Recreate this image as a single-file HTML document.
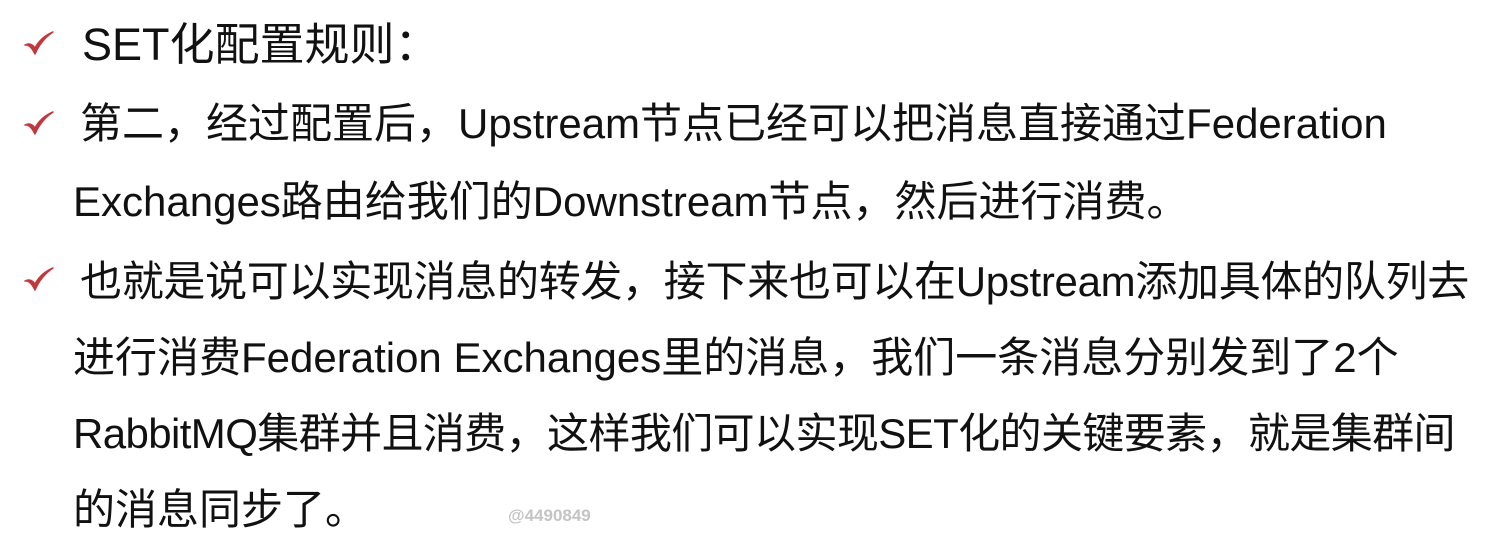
<!DOCTYPE html>
<html><head><meta charset="utf-8"><style>
body{margin:0;width:1500px;height:544px;background:#fff;overflow:hidden;position:relative;font-family:"Liberation Sans","Noto Sans CJK SC",sans-serif;color:#111;}
.l{position:absolute;white-space:nowrap;font-size:42px;line-height:50px;}
.c{position:absolute;left:24px;width:30px;height:28px;}
.w{position:absolute;left:508px;top:506px;font-size:17px;color:#c4c4c4;font-weight:bold;}
</style></head><body>
<svg class="c" style="top:30px" viewBox="0 0 30 28"><path d="M1 15 Q6 14 11 24 Q17 10 29 2 Q17 7 11 18 Q7 12 1 15Z" fill="#c0393e" stroke="#c0393e" stroke-width="1.5" stroke-linejoin="round"/></svg>
<svg class="c" style="top:110px" viewBox="0 0 30 28"><path d="M1 15 Q6 14 11 24 Q17 10 29 2 Q17 7 11 18 Q7 12 1 15Z" fill="#c0393e" stroke="#c0393e" stroke-width="1.5" stroke-linejoin="round"/></svg>
<svg class="c" style="top:266px" viewBox="0 0 30 28"><path d="M1 15 Q6 14 11 24 Q17 10 29 2 Q17 7 11 18 Q7 12 1 15Z" fill="#c0393e" stroke="#c0393e" stroke-width="1.5" stroke-linejoin="round"/></svg>
<div class="l" style="left:82px;top:20px;font-size:45px">SET化配置规则：</div>
<div class="l" style="left:80px;top:99px">第二，经过配置后，Upstream节点已经可以把消息直接通过Federation</div>
<div class="l" style="left:73px;top:177px">Exchanges路由给我们的Downstream节点，然后进行消费。</div>
<div class="l" style="left:80px;top:257px;letter-spacing:-0.3px">也就是说可以实现消息的转发，接下来也可以在Upstream添加具体的队列去</div>
<div class="l" style="left:73px;top:333px">进行消费Federation Exchanges里的消息，我们一条消息分别发到了2个</div>
<div class="l" style="left:73px;top:409px;letter-spacing:-0.6px">RabbitMQ集群并且消费，这样我们可以实现SET化的关键要素，就是集群间</div>
<div class="l" style="left:73px;top:485px">的消息同步了。</div>
<div class="w">@4490849</div>
</body></html>
